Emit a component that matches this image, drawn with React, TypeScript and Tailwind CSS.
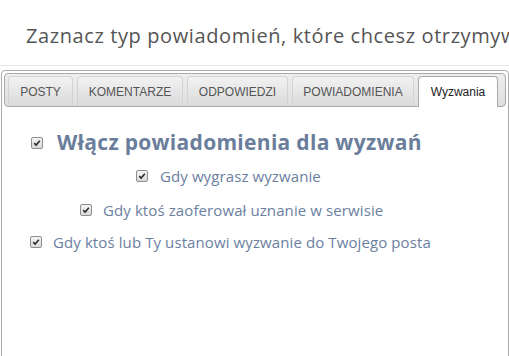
import React from "react";

const tabs = [
  { label: "POSTY", w: "w-[65px]" },
  { label: "KOMENTARZE", w: "w-[106px]" },
  { label: "ODPOWIEDZI", w: "w-[101px]" },
  { label: "POWIADOMIENIA", w: "w-[122px]" },
];

function Check() {
  return (
    <span className="inline-flex items-center justify-center w-[12px] h-[12px] shrink-0 rounded-[2px] border border-[#8e8e8e] bg-gradient-to-b from-[#f4f4f4] to-[#d9d9d9]">
      <svg viewBox="0 0 10 10" className="w-[8px] h-[8px]">
        <path d="M1.5 5.2 L3.9 7.6 L8.6 2.2" fill="none" stroke="#2b2b2b" strokeWidth="2" />
      </svg>
    </span>
  );
}

export default function App() {
  return (
    <div className="w-[509px] h-[356px] overflow-hidden bg-white font-['Open_Sans',sans-serif]">
      {/* Title */}
      <div className="pt-[22px] pl-[26px] whitespace-nowrap text-[20px] tracking-[0.6px] leading-7 text-[#555]">
        Zaznacz typ powiadomień, które chcesz otrzymywać
      </div>
      <div className="mt-[15px] h-px w-full bg-[#e6e6e6]"></div>

      {/* Tabs panel */}
      <div className="mt-[4px] ml-px w-[508px] h-[300px] p-[2px] border border-[#aaa] rounded-[4px]">
        <div className="flex gap-[4px] pt-[2px] pl-[3px] h-[34px] border border-[#aaa] rounded-[4px] bg-gradient-to-b from-[#eeeeee] to-[#dedede] font-['Liberation_Sans',Arial,sans-serif] text-[12px]">
          {tabs.map((t) => (
            <div
              key={t.label}
              className={`${t.w} h-[30px] flex items-center justify-center border border-[#d3d3d3] border-b-0 rounded-t-[4px] bg-gradient-to-b from-[#f2f2f2] to-[#dadada] text-[#555]`}
            >
              {t.label}
            </div>
          ))}
          <div className="w-[80px] h-[31px] flex items-center justify-center border border-[#aaa] border-b-0 rounded-t-[4px] bg-white text-[#212121] pb-px">
            Wyzwania
          </div>
        </div>

        {/* Content */}
        <div className="pt-[22px] text-[#6b80a0]">
          <div className="h-[28px] flex items-center gap-[14px] pl-[27px]">
            <Check />
            <span className="text-[21px] tracking-[0.3px] font-bold text-[#6a7e9c]">Włącz powiadomienia dla wyzwań</span>
          </div>
          <div className="mt-[7px] h-[24px] flex items-center gap-[12px] pl-[132px] text-[15px] tracking-[0.1px]">
            <Check />
            <span>Gdy wygrasz wyzwanie</span>
          </div>
          <div className="mt-[10px] h-[24px] flex items-center gap-[11px] pl-[76px] text-[15px] tracking-[0.1px]">
            <Check />
            <span>Gdy ktoś zaoferował uznanie w serwisie</span>
          </div>
          <div className="mt-[8px] h-[24px] flex items-center gap-[11px] pl-[26px] text-[15px] tracking-[0.1px]">
            <Check />
            <span>Gdy ktoś lub Ty ustanowi wyzwanie do Twojego posta</span>
          </div>
        </div>
      </div>
    </div>
  );
}
